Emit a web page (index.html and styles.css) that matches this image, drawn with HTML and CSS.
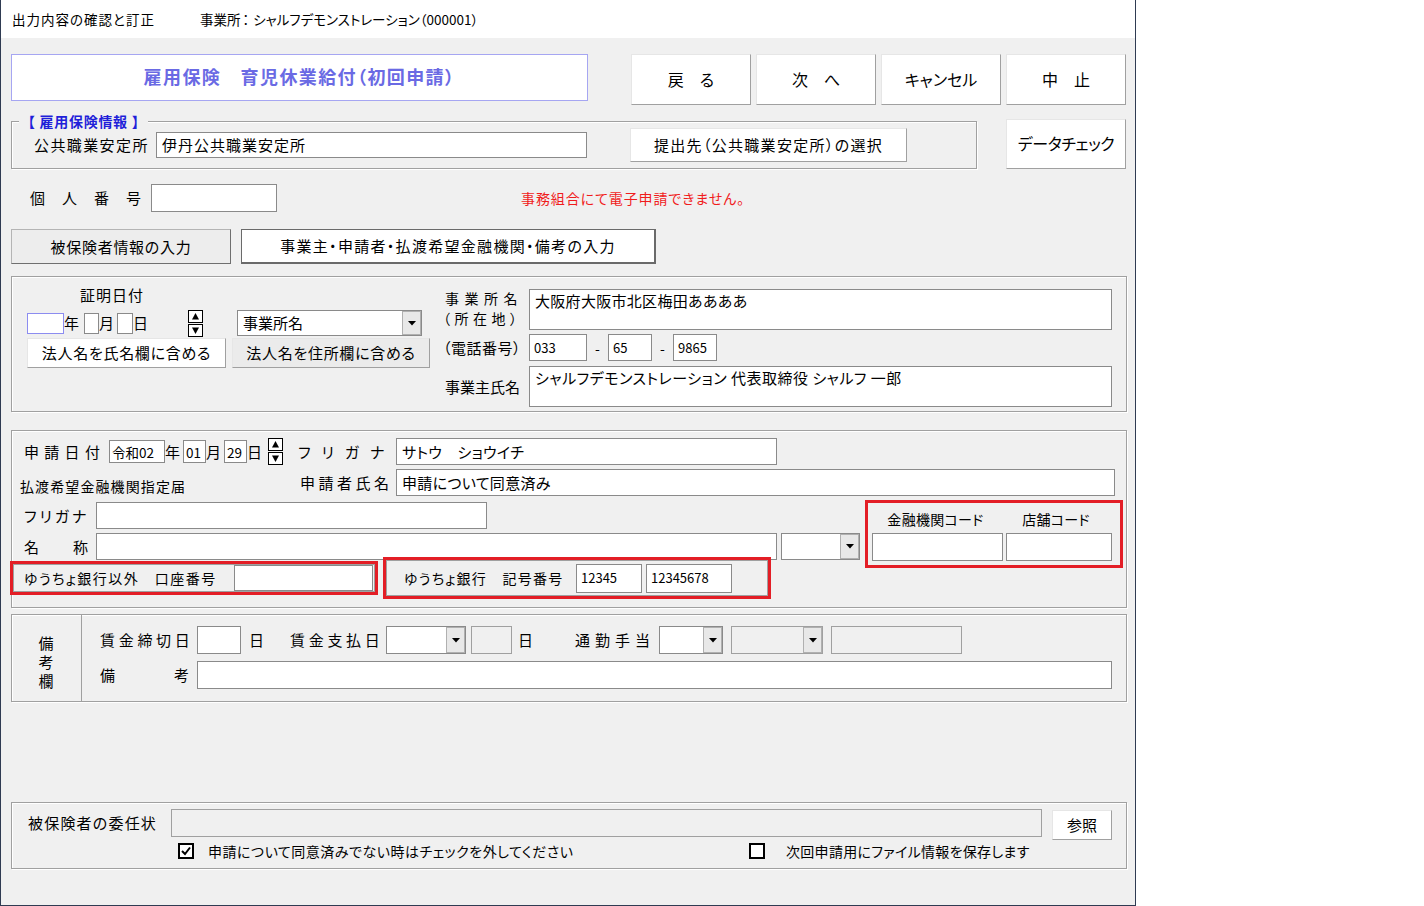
FILE: index.html
```html
<!DOCTYPE html>
<html lang="ja">
<head>
<meta charset="utf-8">
<title>出力内容の確認と訂正</title>
<link rel="stylesheet" href="styles.css">
</head>
<body>
<div class="win">
  <div class="titlebar"><span class="tt1">出力内容の確認と訂正</span><span class="tt2">事業所<span class="colon">：</span>シャルフデモンストレーション（000001）</span></div>
  <div class="content">
    <div class="row r1">
      <div class="formtitle">雇用保険　育児休業給付（初回申請）</div>
      <div class="navbtns">
        <div class="btn nav">戻　る</div>
        <div class="btn nav">次　へ</div>
        <div class="btn nav">キャンセル</div>
        <div class="btn nav">中　止</div>
      </div>
    </div>

    <div class="row r2">
      <div class="grp g1">
        <span class="legend">【 雇用保険情報 】</span>
        <span class="lbl l-ankou">公共職業安定所</span>
        <div class="tb tb-ankou">伊丹公共職業安定所</div>
        <div class="btn b-teishutsu">提出先（公共職業安定所）の選択</div>
      </div>
      <div class="btn b-check">データチェック</div>
    </div>

    <div class="row r3">
      <span class="lbl l-kojin">個　人　番　号</span>
      <div class="tb tb-kojin"></div>
      <span class="warn">事務組合にて電子申請できません。</span>
    </div>

    <div class="row r4">
      <div class="btn tab tab1">被保険者情報の入力</div>
      <div class="btn tab tab2">事業主・申請者・払渡希望金融機関・備考の入力</div>
    </div>

    <div class="grp g2">
      <div class="g2left">
        <div class="shomei">証明日付</div>
        <div class="row daterow">
          <div class="tb dbox dy"></div><span class="du du1">年</span>
          <div class="tb dbox dm"></div><span class="du du2">月</span>
          <div class="tb dbox dd"></div><span class="du du3">日</span>
          <svg class="spin" width="15" height="27" viewBox="0 0 15 27"><rect x="0.5" y="0.5" width="14" height="12" fill="#fff" stroke="#000"/><rect x="0.5" y="14.5" width="14" height="12" fill="#fff" stroke="#000"/><polygon points="7.5,3 11,9.5 4,9.5" fill="#000"/><polygon points="4,17.5 11,17.5 7.5,24" fill="#000"/></svg>
          <div class="combo cb-office"><span class="cbtext">事業所名</span><span class="cbarrow"><svg width="8" height="5" viewBox="0 0 8 5"><polygon points="0,0 8,0 4,4.5" fill="#000"/></svg></span></div>
        </div>
        <div class="row hbtnrow">
          <div class="btn hb hb1">法人名を氏名欄に含める</div>
          <div class="btn hb hb2">法人名を住所欄に含める</div>
        </div>
      </div>
      <div class="g2right">
        <div class="row jrow1">
          <div class="lbl2">
            <div class="ln1">事業所名</div>
            <div class="ln2">（所在地）</div>
          </div>
          <div class="tb ta">大阪府大阪市北区梅田ああああ</div>
        </div>
        <div class="row jrow2">
          <span class="lbl l-tel">（電話番号）</span>
          <div class="tb num tel1">033</div>
          <span class="dash">-</span>
          <div class="tb num tel2">65</div>
          <span class="dash">-</span>
          <div class="tb num tel3">9865</div>
        </div>
        <div class="row jrow3">
          <span class="lbl l-jnushi">事業主氏名</span>
          <div class="tb ta">シャルフデモンストレーション 代表取締役 シャルフ 一郎</div>
        </div>
      </div>
    </div>

    <div class="grp g3">
      <div class="row ra">
        <span class="lbl l-shinsei">申請日付</span>
        <div class="tb small sbox s1">令和02</div><span class="du su1">年</span>
        <div class="tb small sbox s2">01</div><span class="du su2">月</span>
        <div class="tb small sbox s3">29</div><span class="du su3">日</span>
        <svg class="spin" width="15" height="27" viewBox="0 0 15 27"><rect x="0.5" y="0.5" width="14" height="12" fill="#fff" stroke="#000"/><rect x="0.5" y="14.5" width="14" height="12" fill="#fff" stroke="#000"/><polygon points="7.5,3 11,9.5 4,9.5" fill="#000"/><polygon points="4,17.5 11,17.5 7.5,24" fill="#000"/></svg>
        <span class="lbl l-furi1">フリガナ</span>
        <div class="tb tb-furi1">サトウ　ショウイチ</div>
      </div>
      <div class="row rb">
        <span class="lbl l-haraiwatashi">払渡希望金融機関指定届</span>
        <span class="lbl l-shimei">申請者氏名</span>
        <div class="tb tb-shimei">申請について同意済み</div>
      </div>
      <div class="row rcd">
        <div class="cdleft">
          <div class="row rc">
            <span class="lbl l-furi2">フリガナ</span>
            <div class="tb tb-furi2"></div>
          </div>
          <div class="row rd">
            <span class="lbl l-meisho"><span>名</span><span>称</span></span>
            <div class="tb tb-meisho"></div>
            <div class="combo cb-shu"><span class="cbtext"></span><span class="cbarrow"><svg width="8" height="5" viewBox="0 0 8 5"><polygon points="0,0 8,0 4,4.5" fill="#000"/></svg></span></div>
          </div>
        </div>
        <div class="redbox red3">
          <div class="row codelbls">
            <span class="codel cl1">金融機関コード</span>
            <span class="codel cl2">店舗コード</span>
          </div>
          <div class="row codeins">
            <div class="tb code1"></div>
            <div class="tb code2"></div>
          </div>
        </div>
      </div>
      <div class="row re">
        <div class="redbox red1">
          <div class="panel p1">
            <span class="lbl l-igai">ゆうちょ銀行以外　口座番号</span>
            <div class="tb tb-koza"></div>
          </div>
        </div>
        <div class="redbox red2">
          <div class="panel p2">
            <span class="lbl l-yucho">ゆうちょ銀行　記号番号</span>
            <div class="tb num kigo">12345</div>
            <div class="tb num bango">12345678</div>
          </div>
        </div>
      </div>
    </div>

    <div class="grp g4">
      <div class="bside"><span>備</span><span>考</span><span>欄</span></div>
      <div class="g4main">
        <div class="row g4r1">
          <span class="lbl l-shime">賃金締切日</span>
          <div class="tb tb-shime"></div>
          <span class="du du-a">日</span>
          <span class="lbl l-shiharai">賃金支払日</span>
          <div class="combo cb-pay"><span class="cbtext"></span><span class="cbarrow"><svg width="8" height="5" viewBox="0 0 8 5"><polygon points="0,0 8,0 4,4.5" fill="#000"/></svg></span></div>
          <div class="tb gray tb-payday"></div>
          <span class="du du-b">日</span>
          <span class="lbl l-tsukin">通勤手当</span>
          <div class="combo cb-t1"><span class="cbtext"></span><span class="cbarrow"><svg width="8" height="5" viewBox="0 0 8 5"><polygon points="0,0 8,0 4,4.5" fill="#000"/></svg></span></div>
          <div class="combo gray cb-t2"><span class="cbtext"></span><span class="cbarrow"><svg width="8" height="5" viewBox="0 0 8 5"><polygon points="0,0 8,0 4,4.5" fill="#000"/></svg></span></div>
          <div class="tb gray tb-tsukin"></div>
        </div>
        <div class="row g4r2">
          <span class="lbl l-biko"><span>備</span><span>考</span></span>
          <div class="tb tb-biko"></div>
        </div>
      </div>
    </div>

    <div class="grp g5">
      <div class="row g5r1">
        <span class="lbl l-inin">被保険者の委任状</span>
        <div class="tb gray tb-inin"></div>
        <div class="btn b-sansho">参照</div>
      </div>
      <div class="row g5r2">
        <span class="chk on"><svg width="12" height="12" viewBox="0 0 12 12"><polyline points="2,6 5,9 10,2.5" fill="none" stroke="#000" stroke-width="2"/></svg></span>
        <span class="chktext ct1">申請について同意済みでない時はチェックを外してください</span>
        <span class="chk"></span>
        <span class="chktext ct2">次回申請用にファイル情報を保存します</span>
      </div>
    </div>
  </div>
</div>
</body>
</html>
```

FILE: styles.css
```css
* { box-sizing: border-box; }
body {
  margin: 0;
  background: #fff;
  font-family: "Noto Sans CJK JP", "Noto Sans", sans-serif;
  font-size: 15px;
  color: #000;
  font-feature-settings: "palt";
  line-height: 20px;
}
.win {
  width: 1136px;
  height: 906px;
  background: #f0f0f0;
  border-left: 1px solid #2f3b52;
  border-right: 1px solid #2f3b52;
  border-bottom: 1px solid #2f3b52;
}
.titlebar {
  height: 38px;
  background: #fff;
  display: flex;
  align-items: center;
  padding-left: 11px;
  font-size: 13.5px;
  letter-spacing: 1px;
}
.tt2 { margin-left: 45px; letter-spacing: 0; }
.colon { margin: 0 4px 0 2px; }
.content { padding-left: 10px; }
.row { display: flex; align-items: center; }

.tb {
  background: #fff;
  border: 1px solid #8a8a8a;
  height: 27px;
  display: flex;
  align-items: center;
  padding: 0 5px;
  white-space: nowrap;
  overflow: hidden;
  font-size: 15px;
  letter-spacing: 0.3px;
}
.tb.gray { background: #f0f0f0; border-color: #a0a0a0; }
.tb.num { font-size: 13px; letter-spacing: 0; padding-left: 4px; }
.tb.small { font-size: 13.5px; padding: 0 2px; letter-spacing: 0; }
.ta { height: 41px; width: 583px; align-items: flex-start; padding-top: 1px; }
.jrow3 .ta { letter-spacing: 0.5px; }

.btn {
  background: #fff;
  border: 1px solid #e6e6e6;
  border-right-color: #a0a0a0;
  border-bottom-color: #a0a0a0;
  display: flex;
  align-items: center;
  justify-content: center;
  white-space: nowrap;
}
.grp {
  border: 1px solid #a0a0a0;
  box-shadow: inset 1px 1px 0 #fff, 1px 1px 0 #fff;
  position: relative;
}
.lbl { white-space: nowrap; flex: none; }
.du { flex: none; white-space: nowrap; }

/* row 1 */
.r1 { margin-top: 16px; align-items: flex-start; }
.formtitle {
  width: 577px;
  height: 47px;
  background: #fff;
  border: 1px solid #a6a6f2;
  color: #6a6ae4;
  font-weight: bold;
  font-size: 18px;
  letter-spacing: 1.4px;
  display: flex;
  align-items: center;
  justify-content: center;
  padding-bottom: 3px;
}
.navbtns { display: flex; gap: 5px; margin-left: 43px; }
.nav { width: 120px; height: 51px; font-size: 16px; padding-bottom: 2px; }

/* row 2 */
.r2 { margin-top: 14px; align-items: flex-start; }
.g1 {
  width: 966px;
  height: 48px;
  margin-top: 2px;
  display: flex;
  align-items: center;
}
.legend {
  position: absolute;
  left: 7px;
  top: -11px;
  padding: 0 2px;
  background: #f0f0f0;
  color: #1f1fd9;
  font-size: 14px;
  font-weight: bold;
  font-feature-settings: normal;
  letter-spacing: 0.7px;
}
.l-ankou { margin-left: 22px; width: 122px; letter-spacing: 1.4px; }
.tb-ankou { width: 431px; height: 26px; letter-spacing: 1px; }
.b-teishutsu { margin-left: 43px; width: 277px; height: 34px; letter-spacing: 1.3px; }
.b-check { margin-left: 29px; width: 120px; height: 50px; font-size: 16px; letter-spacing: -0.4px; padding-bottom: 2px; }

/* row 3 */
.r3 { margin-top: 15px; }
.l-kojin { margin-left: 19px; width: 121px; letter-spacing: 1px; font-feature-settings: normal; }
.tb-kojin { width: 126px; height: 28px; }
.warn { margin-left: 244px; color: #f01c1c; font-size: 14px; letter-spacing: 0.9px; }

/* row 4 */
.r4 { margin-top: 17px; }
.tab { height: 35px; }
.tab1 { width: 220px; background: #ededed; border: 1px solid #b4b4b4; border-right-color: #6f6f6f; border-bottom-color: #6f6f6f; letter-spacing: 0.7px; }
.tab2 { width: 415px; margin-left: 10px; border: 1px solid #6a6a6a; border-right-width: 2px; border-bottom-width: 2px; letter-spacing: 1.3px; }

/* group 2 */
.g2 { margin-top: 12px; width: 1116px; height: 136px; display: flex; }
.g2left { margin-left: 15px; width: 403px; }
.shomei { margin-top: 8px; margin-left: 53px; height: 20px; letter-spacing: 1px; }
.daterow { margin-top: 5px; height: 26px; }
.dbox { height: 21px; }
.tb.dy { width: 37px; border-color: #8c8cf0; }
.dm { width: 15px; }
.dd { width: 16px; }
.du1 { width: 20px; }
.du2 { width: 18px; }
.du3 { width: 55px; }
.combo {
  height: 27px;
  background: #fff;
  border: 1px solid #8a8a8a;
  display: flex;
  align-items: stretch;
}
.combo.gray { background: #f0f0f0; border-color: #a0a0a0; }
.cbtext { flex: 1; display: flex; align-items: center; padding-left: 5px; white-space: nowrap; }
.cbarrow {
  width: 19px;
  background: #e8e8e8;
  border: 1px solid #b0b0b0;
  display: flex;
  align-items: center;
  justify-content: center;
}
.cb-office { margin-left: 34px; width: 185px; height: 26px; }
.hbtnrow { margin-top: 2px; }
.hb { height: 30px; letter-spacing: 0.7px; }
.hb1 { width: 199px; }
.hb2 { width: 198px; margin-left: 6px; background: #ebebeb; }

.g2right { margin-left: 13px; margin-top: 12px; }
.jrow1 { align-items: flex-start; height: 41px; }
.lbl2 { width: 86px; font-size: 14px; }
.ln1 { height: 18px; line-height: 18px; padding-left: 2px; letter-spacing: 5.5px; }
.ln2 { height: 23px; line-height: 23px; letter-spacing: 4.5px; }
.jrow2 { margin-top: 4px; }
.l-tel { width: 86px; letter-spacing: 0.5px; }
.tel1 { width: 58px; }
.tel2, .tel3 { width: 44px; }
.dash { width: 21px; text-align: center; font-size: 14px; }
.jrow3 { margin-top: 5px; }
.l-jnushi { width: 86px; padding-left: 2px; }

/* group 3 */
.g3 { margin-top: 18px; width: 1116px; height: 178px; }
.ra { margin-top: 7px; margin-left: 12px; }
.l-shinsei { width: 85px; letter-spacing: 5.3px; }
.sbox { height: 23px; }
.s1 { width: 56px; }
.s2, .s3 { width: 23px; }
.su1, .su2 { width: 18px; }
.su3 { width: 21px; }
.l-furi1 { margin-left: 15px; width: 98px; letter-spacing: 11px; }
.tb-furi1 { width: 381px; }
.rb { margin-top: 4px; margin-left: 8px; height: 27px; }
.l-haraiwatashi { width: 280px; font-size: 14px; align-self: flex-end; line-height: 18px; margin-bottom: 1px; letter-spacing: 1.1px; }
.l-shimei { width: 96px; letter-spacing: 3.5px; }
.tb-shimei { width: 719px; }
.rcd { margin-top: 6px; margin-left: 12px; align-items: flex-start; }
.cdleft { width: 836px; }
.l-furi2 { width: 72px; letter-spacing: 3px; }
.tb-furi2 { width: 391px; }
.rd { margin-top: 4px; }
.l-meisho { width: 64px; margin-right: 8px; display: flex; justify-content: space-between; }
.tb-meisho { width: 681px; }
.cb-shu { margin-left: 4px; width: 79px; }
.redbox { border: 3px solid #e31e26; }
.red3 { margin-left: 5px; margin-top: -2px; margin-bottom: -8px; width: 258px; height: 68px; }
.codelbls { margin-top: 6px; height: 20px; }
.codel { font-size: 14px; text-align: center; letter-spacing: 0.3px; }
.cl1 { width: 135px; }
.cl2 { width: 106px; }
.codeins { margin-top: 4px; margin-left: 4px; }
.code1 { width: 131px; height: 28px; }
.code2 { width: 106px; height: 28px; margin-left: 3px; }
.re { margin-top: -3px; }
.red1 { margin-left: -2px; width: 368px; height: 34px; }
.panel { height: 100%; border: 1px solid #a0a0a0; display: flex; align-items: center; }
.p1 { padding-left: 10px; }
.l-igai { width: 210px; font-size: 14px; letter-spacing: 1.5px; }
.tb-koza { width: 139px; height: 26px; }
.red2 { margin-left: 5px; width: 388px; height: 42px; }
.p2 { padding-left: 17px; }
.l-yucho { width: 172px; font-size: 14px; letter-spacing: 1.3px; }
.kigo { width: 66px; height: 29px; }
.bango { width: 86px; height: 29px; margin-left: 4px; }

/* group 4 */
.g4 { margin-top: 6px; width: 1116px; height: 88px; display: flex; }
.bside {
  width: 70px;
  border-right: 1px solid #a0a0a0;
  display: flex;
  flex-direction: column;
  align-items: center;
  justify-content: center;
  line-height: 19px;
  padding-top: 6px;
  padding-right: 1px;
}
.g4main { margin-left: 18px; }
.g4r1 { margin-top: 11px; }
.l-shime { width: 97px; letter-spacing: 3.7px; }
.tb-shime { width: 44px; height: 28px; }
.du-a { margin-left: 8px; width: 41px; }
.l-shiharai { width: 96px; letter-spacing: 3.7px; }
.cb-pay { width: 80px; height: 28px; }
.tb-payday { margin-left: 5px; width: 41px; height: 28px; }
.du-b { margin-left: 6px; width: 57px; }
.l-tsukin { width: 84px; letter-spacing: 5px; }
.cb-t1 { width: 64px; height: 28px; }
.cb-t2 { margin-left: 8px; width: 92px; height: 28px; }
.tb-tsukin { margin-left: 8px; width: 131px; height: 28px; }
.g4r2 { margin-top: 7px; }
.l-biko { width: 89px; margin-right: 8px; display: flex; justify-content: space-between; }
.tb-biko { width: 915px; height: 28px; }

/* group 5 */
.g5 { margin-top: 100px; width: 1116px; height: 67px; }
.g5r1 { margin-top: 6px; align-items: flex-start; }
.l-inin { margin-left: 16px; width: 143px; line-height: 28px; letter-spacing: 1.2px; }
.tb-inin { width: 871px; height: 28px; }
.b-sansho { margin-left: 10px; margin-top: 1px; width: 60px; height: 30px; }
.g5r2 { margin-top: 3px; margin-left: 166px; height: 16px; }
.chk {
  width: 16px;
  height: 16px;
  border: 2px solid #000;
  background: #fff;
  display: flex;
  align-items: center;
  justify-content: center;
  flex: none;
}
.chktext { font-size: 14px; white-space: nowrap; letter-spacing: 0.5px; }
.ct1 { margin-left: 14px; width: 541px; }
.ct2 { margin-left: 21px; letter-spacing: 0.3px; }
```
